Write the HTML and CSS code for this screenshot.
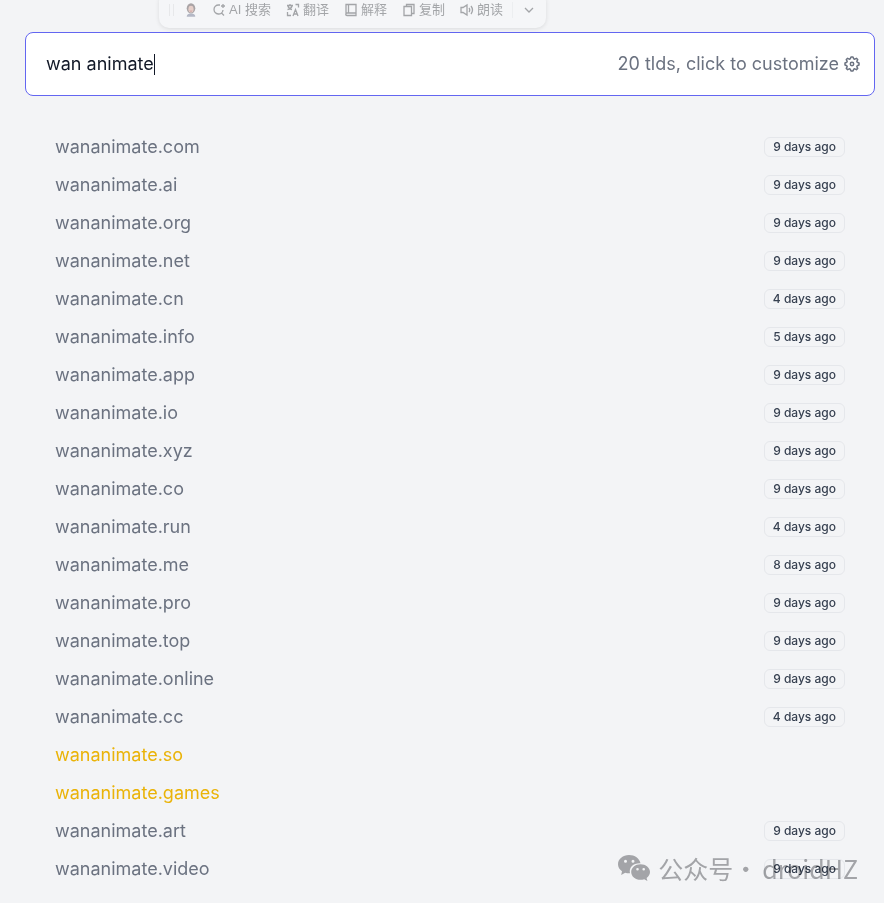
FILE: index.html
```html
<!DOCTYPE html>
<html lang="en">
<head>
    <meta charset="UTF-8">
    <meta name="viewport" content="width=device-width, initial-scale=1.0">
    <title>Domain Search</title>
    <link rel="stylesheet" href="styles.css">
</head>
<body>
    <!-- Selection toolbar -->
    <div class="toolbar" lang="zh-CN">
        <span class="grip"></span>
        <svg class="avatar" viewBox="0 0 14 16">
            <ellipse cx="7" cy="6" rx="5" ry="6" fill="#a9a4a6"/>
            <path d="M2 16c0-3 2-4 5-4s5 1 5 4z" fill="#b4b8c6"/>
            <ellipse cx="7" cy="7" rx="3" ry="4" fill="#e6cfc9"/>
            <path d="M5.500 9q1.500 1 3 0" fill="none" stroke="#c99a98"/>
        </svg>
        <button class="tool">
            <svg class="icon" viewBox="0 0 14 14"><path d="M8 2H6.500a4.500 4.500 0 1 0 4.500 5M9.500 10l2.500 2.500M11 1v4M9 3h4"/></svg>
            AI 搜索
        </button>
        <button class="tool">
            <svg class="icon" viewBox="0 0 14 14"><path d="M1 2.500h6M4 1v1.500M2 3c.5 2 2 3 4 3.500M6 3C5.500 5 4 6 1.500 6.500M7 13l2.500-6.500L12 13M8 11h3.500M9.500 1.500h3V4.500M1.500 9v3.500H5"/></svg>
            翻译
        </button>
        <button class="tool">
            <svg class="icon" viewBox="0 0 14 14"><path d="M2 11.500V1.500h10v11H3a1 1 0 0 1 0-2.500h9M4.500 1.500V10"/></svg>
            解释
        </button>
        <button class="tool">
            <svg class="icon" viewBox="0 0 14 14"><path d="M4.500 3V1.500H12v9h-2M2 3.500h7.500v9H2z"/></svg>
            复制
        </button>
        <button class="tool">
            <svg class="icon" viewBox="0 0 14 14"><path d="M1 4.500h2L7 2v10L3 9.500H1zM9 5q1.500 2 0 4M11 3q3 4 0 8"/></svg>
            朗读
        </button>
        <span class="divider"></span>
        <button class="tool" aria-label="更多">
            <svg class="icon" viewBox="0 0 14 14"><path d="M3 5l4 4 4-4"/></svg>
        </button>
    </div>

    <main class="container">
        <div class="search">
            <label class="field">
                <input class="search-input" type="text" value="wan animate" aria-label="Domain name" spellcheck="false">
                <span class="caret"></span>
            </label>
            <button class="customize">
                20 tlds, click to customize
                <svg class="gear" viewBox="0 0 16 16">
                    <path d="M7 1h2l.7 1.800 1 .4 1.700-.9 1.300 1.300-.9 1.700.4 1L15 7v2l-1.800.7-.4 1 .9 1.700-1.300 1.300-1.700-.9-1 .4L9 15H7l-.7-1.800-1-.4-1.700.9-1.300-1.300.9-1.700-.4-1L1 9V7l1.800-.7.4-1-.9-1.700 1.300-1.300 1.700.9 1-.4z"/>
                    <circle cx="8" cy="8" r="1.700"/>
                </svg>
            </button>
        </div>

        <ul class="results" id="results"></ul>
    </main>

    <!-- Account mark -->
    <div class="watermark" lang="zh-CN">
        <svg class="wechat" viewBox="0 0 32 26">
            <path fill-rule="evenodd" d="M11 0C5 0 0 4 0 9.200c0 3 1.500 5.300 4 7L3.200 20l4-2.200q2 .6 4.800.5C10.500 12 16 7.800 22.500 8.300 21.500 3.500 16.800 0 11 0zM7.500 4.800a1.500 1.500 0 1 1 0 3 1.500 1.500 0 0 1 0-3zM15 4.800a1.500 1.500 0 1 1 0 3 1.500 1.500 0 0 1 0-3z"/>
            <path fill-rule="evenodd" d="M22.500 9.200c-5.200 0-9.300 3.400-9.300 7.800s4.100 7.800 9.300 7.800q2 0 3.700-.6l3.200 1.800-.8-3c2-1.500 3.400-3.500 3.400-6 0-4.400-4.300-7.800-9.500-7.800zM19.500 13a1.300 1.300 0 1 1 0 2.600 1.300 1.300 0 0 1 0-2.600zM25.700 13a1.300 1.300 0 1 1 0 2.600 1.300 1.300 0 0 1 0-2.600z"/>
        </svg>
        <span>公众号</span>
        <span>·</span>
        <span class="account">droidHZ</span>
    </div>

    <script src="script.js"></script>
</body>
</html>
```

FILE: styles.css
```css
* {
    box-sizing: border-box;
}
body {
    position: relative;
    margin: 0;
    min-height: 100vh;
    overflow-x: hidden;
    background-color: #f3f4f6;
    color: #6b7280;
    font-family: Inter, "Noto Sans CJK SC", sans-serif;
    font-size: 18px;
    line-height: 28px;
}
button, input {
    padding: 0;
    border: none;
    background: none;
    color: inherit;
    font: inherit;
    outline: none;
}
button {
    cursor: pointer;
}
.container {
    padding: 32px 9px 0 25px;
}

/* Search box */
.search {
    display: flex;
    align-items: center;
    height: 64px;
    padding: 0 14px 0 20px;
    background-color: #fff;
    border: 1px solid #6366f1;
    border-radius: 8px;
}
.field {
    display: flex;
    flex: 1;
    align-items: center;
    color: #111827;
}
.search-input {
    field-sizing: content;
}
.caret {
    width: 1px;
    height: 21px;
    background-color: #111827;
}
.customize {
    display: flex;
    align-items: center;
    gap: 5px;
}
.gear {
    width: 16px;
    height: 16px;
    fill: none;
    stroke: currentColor;
    stroke-width: 1.5;
    stroke-linejoin: round;
}

/* Results */
.results {
    margin: 32px 0 0;
    padding: 0 30px;
    list-style: none;
}
.result {
    display: flex;
    align-items: center;
    justify-content: space-between;
    padding: 5px 0;
}
.result a {
    color: inherit;
    text-decoration: none;
}
.available {
    color: #eab308;
}
.badge {
    padding: 0 8px;
    border: 1px solid #e5e7eb;
    border-radius: 6px;
    color: #374151;
    font-size: 12px;
    font-weight: 500;
    line-height: 18px;
}

/* Selection toolbar */
.toolbar {
    position: absolute;
    top: -8px;
    left: 159px;
    display: flex;
    align-items: center;
    gap: 15px;
    height: 36px;
    padding: 0 10px;
    border-radius: 10px;
    background-color: #f5f6f8;
    box-shadow: 0 1px 4px rgba(0, 0, 0, 0.1);
    color: #a3a5a8;
    font-family: "Liberation Sans", "Noto Sans CJK SC", sans-serif;
    font-size: 13px;
    line-height: 20px;
}
.grip {
    width: 5px;
    height: 12px;
    margin-right: -4px;
    border: solid #e7e8ea;
    border-width: 0 1px;
}
.avatar {
    width: 12px;
    height: 14px;
}
.tool {
    display: flex;
    align-items: center;
    gap: 3px;
}
.icon {
    width: 14px;
    height: 14px;
    fill: none;
    stroke: currentColor;
    stroke-width: 1.3;
}
.divider {
    width: 1px;
    height: 16px;
    margin: 0 -6px;
    background-color: #eceef0;
}

/* Account mark */
.watermark {
    position: absolute;
    top: 852px;
    right: 26px;
    display: flex;
    align-items: center;
    color: #abacae;
    font-family: "Noto Sans CJK SC", sans-serif;
    font-size: 25px;
    line-height: 32px;
    pointer-events: none;
    mix-blend-mode: multiply;
}
.wechat {
    width: 32px;
    height: 26px;
    margin-right: 8px;
    fill: currentColor;
}
.account {
    margin-left: 4px;
}
```

FILE: script.js
```js
const results = [
    { tld: "com", age: "9 days ago" },
    { tld: "ai", age: "9 days ago" },
    { tld: "org", age: "9 days ago" },
    { tld: "net", age: "9 days ago" },
    { tld: "cn", age: "4 days ago" },
    { tld: "info", age: "5 days ago" },
    { tld: "app", age: "9 days ago" },
    { tld: "io", age: "9 days ago" },
    { tld: "xyz", age: "9 days ago" },
    { tld: "co", age: "9 days ago" },
    { tld: "run", age: "4 days ago" },
    { tld: "me", age: "8 days ago" },
    { tld: "pro", age: "9 days ago" },
    { tld: "top", age: "9 days ago" },
    { tld: "online", age: "9 days ago" },
    { tld: "cc", age: "4 days ago" },
    { tld: "so" },
    { tld: "games" },
    { tld: "art", age: "9 days ago" },
    { tld: "video", age: "9 days ago" }
];

// Domains without a registration age are still available
document.getElementById("results").innerHTML = results.map(({ tld, age }) => `
    <li class="result ${age ? "" : "available"}">
        <a href="#${tld}">wananimate.${tld}</a>
        ${age ? `<span class="badge">${age}</span>` : ""}
    </li>
`).join("");
```
